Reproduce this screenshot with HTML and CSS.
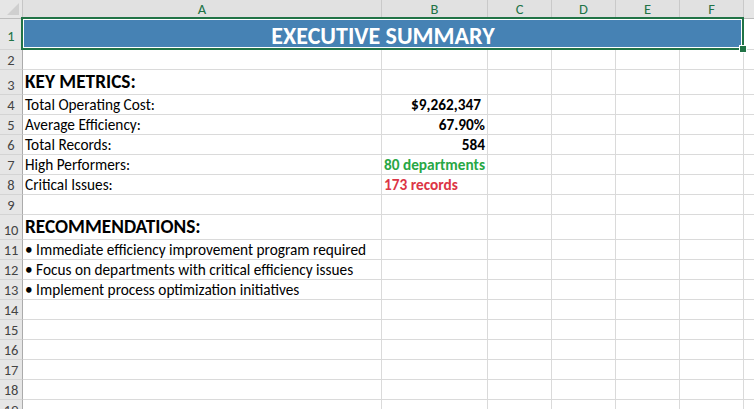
FILE: index.html
```html
<!DOCTYPE html>
<html>
<head>
<meta charset="utf-8">
<link rel="stylesheet" href="styles.css">
</head>
<body>
<div class="sheet">
  <div class="row hdr">
    <div class="corner"><span class="tri"></span></div>
    <div class="ch sel">A</div><div class="ch sel">B</div><div class="ch sel">C</div><div class="ch sel">D</div><div class="ch sel">E</div><div class="ch sel">F</div><div class="ch last"></div>
  </div>
  <div class="row r1">
    <div class="rh sel">1</div>
    <div class="c title">EXECUTIVE SUMMARY</div>
    <div class="c g"></div>
  </div>
  <div class="row"><div class="rh">2</div><div class="c"></div><div class="c"></div><div class="c"></div><div class="c"></div><div class="c"></div><div class="c"></div><div class="c g"></div></div>
  <div class="row tall"><div class="rh">3</div><div class="c head">KEY METRICS:</div><div class="c"></div><div class="c"></div><div class="c"></div><div class="c"></div><div class="c"></div><div class="c g"></div></div>
  <div class="row"><div class="rh">4</div><div class="c">Total Operating Cost:</div><div class="c num cur">$9,262,347</div><div class="c"></div><div class="c"></div><div class="c"></div><div class="c"></div><div class="c g"></div></div>
  <div class="row"><div class="rh">5</div><div class="c">Average Efficiency:</div><div class="c num">67.90%</div><div class="c"></div><div class="c"></div><div class="c"></div><div class="c"></div><div class="c g"></div></div>
  <div class="row"><div class="rh">6</div><div class="c">Total Records:</div><div class="c num">584</div><div class="c"></div><div class="c"></div><div class="c"></div><div class="c"></div><div class="c g"></div></div>
  <div class="row"><div class="rh">7</div><div class="c">High Performers:</div><div class="c good">80 departments</div><div class="c"></div><div class="c"></div><div class="c"></div><div class="c"></div><div class="c g"></div></div>
  <div class="row"><div class="rh">8</div><div class="c">Critical Issues:</div><div class="c bad">173 records</div><div class="c"></div><div class="c"></div><div class="c"></div><div class="c"></div><div class="c g"></div></div>
  <div class="row"><div class="rh">9</div><div class="c"></div><div class="c"></div><div class="c"></div><div class="c"></div><div class="c"></div><div class="c"></div><div class="c g"></div></div>
  <div class="row tall"><div class="rh">10</div><div class="c head">RECOMMENDATIONS:</div><div class="c"></div><div class="c"></div><div class="c"></div><div class="c"></div><div class="c"></div><div class="c g"></div></div>
  <div class="row"><div class="rh">11</div><div class="c">• Immediate efficiency improvement program required</div><div class="c"></div><div class="c"></div><div class="c"></div><div class="c"></div><div class="c"></div><div class="c g"></div></div>
  <div class="row"><div class="rh">12</div><div class="c">• Focus on departments with critical efficiency issues</div><div class="c"></div><div class="c"></div><div class="c"></div><div class="c"></div><div class="c"></div><div class="c g"></div></div>
  <div class="row"><div class="rh">13</div><div class="c">• Implement process optimization initiatives</div><div class="c"></div><div class="c"></div><div class="c"></div><div class="c"></div><div class="c"></div><div class="c g"></div></div>
  <div class="row"><div class="rh">14</div><div class="c"></div><div class="c"></div><div class="c"></div><div class="c"></div><div class="c"></div><div class="c"></div><div class="c g"></div></div>
  <div class="row"><div class="rh">15</div><div class="c"></div><div class="c"></div><div class="c"></div><div class="c"></div><div class="c"></div><div class="c"></div><div class="c g"></div></div>
  <div class="row"><div class="rh">16</div><div class="c"></div><div class="c"></div><div class="c"></div><div class="c"></div><div class="c"></div><div class="c"></div><div class="c g"></div></div>
  <div class="row"><div class="rh">17</div><div class="c"></div><div class="c"></div><div class="c"></div><div class="c"></div><div class="c"></div><div class="c"></div><div class="c g"></div></div>
  <div class="row"><div class="rh">18</div><div class="c"></div><div class="c"></div><div class="c"></div><div class="c"></div><div class="c"></div><div class="c"></div><div class="c g"></div></div>
  <div class="row"><div class="rh">19</div><div class="c"></div><div class="c"></div><div class="c"></div><div class="c"></div><div class="c"></div><div class="c"></div><div class="c g"></div></div>
  <div class="selection"><span class="handle"></span></div>
</div>
</body>
</html>
```

FILE: styles.css
```css
html, body {
  margin: 0;
  padding: 0;
  background: #ffffff;
  overflow: hidden;
}
.sheet {
  position: relative;
  width: 754px;
  height: 409px;
  overflow: hidden;
  font-family: "Carlito", "Lato", "Liberation Sans", sans-serif;
  font-size: 15.3px;
  color: #000;
}
.row {
  display: grid;
  grid-template-columns: 23px 359px 106px 64px 64px 64px 64px 1fr;
  height: 20px;
}
.row.hdr { height: 19px; }
.row.r1 { height: 31px; }
.row.tall { height: 25px; }
.corner {
  background: #e6e6e6;
  border-right: 1px solid #c6c6c6;
  border-bottom: 1px solid #bdbdbd;
  position: relative;
}
.tri {
  position: absolute;
  right: 3px;
  bottom: 3px;
  width: 0;
  height: 0;
  border-left: 12px solid transparent;
  border-bottom: 12px solid #cfcfcf;
}
.ch {
  background: #e1e1e1;
  border-right: 1px solid #c9c9c9;
  border-bottom: 1px solid #bdbdbd;
  display: flex;
  align-items: center;
  justify-content: center;
  font-size: 14.5px;
  color: #444;
}
.ch.sel { color: #217346; }
.ch.last { background: #e6e6e6; border-right: none; }
.rh {
  background: #e6e6e6;
  border-right: 1px solid #ababab;
  border-bottom: 1px solid #d4d4d4;
  display: flex;
  align-items: flex-end;
  justify-content: center;
  padding-bottom: 1px;
  font-size: 14.5px;
  line-height: 16px;
  color: #444;
}
.rh.sel { color: #217346; padding-bottom: 5px; }
.c {
  border-right: 1px solid #dadada;
  border-bottom: 1px solid #dadada;
  display: flex;
  align-items: flex-end;
  padding: 0 2px 1px 2px;
  white-space: nowrap;
  line-height: 17px;
  min-width: 0;
}
.c.g { border-right: none; }
.title {
  grid-column: span 6;
  background: #4682b4;
  color: #fff;
  font-weight: bold;
  font-size: 24px;
  justify-content: center;
  align-items: center;
  padding: 2px 0 0 0;
  border-bottom: 1px solid #dadada;
}
.head {
  font-weight: bold;
  font-size: 19.3px;
  line-height: 22px;
}
.num {
  justify-content: flex-end;
  font-weight: bold;
}
.num.cur { padding-right: 6px; }
.good { color: #28a745; font-weight: bold; }
.bad { color: #dc3545; font-weight: bold; }
.selection {
  position: absolute;
  left: 21px;
  top: 17px;
  width: 719px;
  height: 29px;
  border: 2px solid #217346;
  box-shadow: inset 0 0 0 1px #ffffff;
}
.handle {
  position: absolute;
  right: -5px;
  bottom: -5px;
  width: 6px;
  height: 6px;
  background: #217346;
  border: 1px solid #ffffff;
}
```
